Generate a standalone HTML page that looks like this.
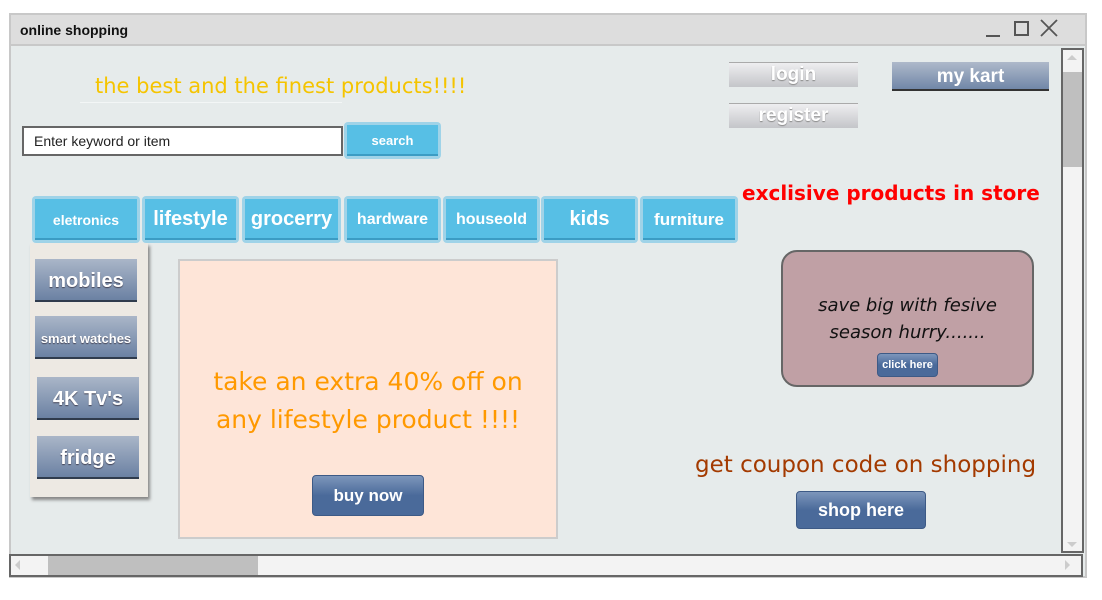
<!DOCTYPE html>
<html><head><meta charset="utf-8"><style>
*{box-sizing:border-box;margin:0;padding:0}
body{width:1102px;height:600px;background:#fff;position:relative;overflow:hidden;font-family:"Liberation Sans",sans-serif}
.a{position:absolute}
.comic{font-family:"Comic Sans MS","DejaVu Sans",sans-serif}
.tab{position:absolute;top:196px;height:47px;background:#9fd3e8;border-radius:4px;padding:3px}
.tab div{width:100%;height:100%;background:#57bfe5;border-bottom:2px solid #3b9cc4;color:#fff;font-weight:bold;display:flex;align-items:center;justify-content:center;padding-top:2px}
.sb{position:absolute;width:102px;height:43px;background:linear-gradient(#aab6c8,#6b81a3);border-bottom:2px solid #2f3b4d;color:#fff;font-weight:bold;display:flex;align-items:center;justify-content:center;text-shadow:0 1px 1px #445;padding-top:3px}
.gb{position:absolute;width:129px;height:25px;background:linear-gradient(#eeeef0,#c4c5c9);border-top:1px solid #aaa;color:#fff;font-weight:bold;font-size:19px;display:flex;align-items:center;justify-content:center;text-shadow:0 1px 1px #888}
.bb{position:absolute;background:linear-gradient(#7d96bb,#4a6a9a 50%);border:1px solid #3d5a86;border-radius:4px;color:#fff;font-weight:bold;display:flex;align-items:center;justify-content:center}
</style></head><body>
<div class="a" style="left:9px;top:13px;width:1078px;height:565px;border:2px solid #c8c8c8;background:#e6ebeb"></div>
<div class="a" style="left:11px;top:15px;width:1074px;height:31px;background:#dddddd;border-bottom:2px solid #c8c8c8"></div>
<div class="a" style="left:20px;top:22px;font-size:14px;font-weight:bold;color:#111">online shopping</div>
<div class="a" style="left:986px;top:35px;width:14px;height:2px;background:#555"></div>
<div class="a" style="left:1014px;top:21px;width:15px;height:15px;border:2px solid #555"></div>
<svg class="a" style="left:1040px;top:19px" width="18" height="18"><path d="M1 1L17 17M17 1L1 17" stroke="#555" stroke-width="1.8"/></svg>
<div class="a" style="left:1061px;top:48px;width:23px;height:505px;background:#f3f3f3;border:2px solid #666"></div>
<div class="a" style="left:1063px;top:72px;width:19px;height:95px;background:#bfbfbf"></div>
<svg class="a" style="left:1066px;top:53px" width="12" height="8"><path d="M1 7L6 2L11 7Z" fill="#ccc"/></svg>
<svg class="a" style="left:1066px;top:541px" width="12" height="8"><path d="M1 1L6 6L11 1Z" fill="#ccc"/></svg>
<div class="a" style="left:9px;top:554px;width:1074px;height:23px;background:#f3f3f3;border:2px solid #666"></div>
<div class="a" style="left:48px;top:556px;width:210px;height:19px;background:#bfbfbf"></div>
<svg class="a" style="left:13px;top:559px" width="8" height="12"><path d="M7 1L2 6L7 11Z" fill="#ccc"/></svg>
<svg class="a" style="left:1064px;top:559px" width="8" height="12"><path d="M1 1L6 6L1 11Z" fill="#ccc"/></svg>

<div class="a comic" style="left:95px;top:74px;font-size:21px;color:#f5c400">the best and the finest products!!!!</div>
<div class="a" style="left:80px;top:102px;width:262px;height:1px;background:#f3f6f6"></div>
<div class="a" style="left:22px;top:126px;width:321px;height:30px;border:2px solid #666;background:#fff;font-size:14px;color:#222;padding:5px 10px">Enter keyword or item</div>
<div class="tab" style="left:344px;top:122px;width:97px;height:37px"><div style="font-size:13px">search</div></div>

<div class="gb" style="left:729px;top:62px">login</div>
<div class="gb" style="left:729px;top:103px">register</div>
<div class="a" style="left:892px;top:62px;width:157px;height:29px;background:linear-gradient(#aeb9ca,#7187a8);border-bottom:2px solid #333;color:#fff;font-weight:bold;font-size:19px;display:flex;align-items:center;justify-content:center;padding-top:2px">my kart</div>

<div class="a comic" style="left:742px;top:181px;font-size:20px;color:#f00;font-weight:bold">exclisive products in store</div>

<div class="tab" style="left:32px;width:108px"><div style="font-size:14px">eletronics</div></div>
<div class="tab" style="left:142px;width:97px"><div style="font-size:20px">lifestyle</div></div>
<div class="tab" style="left:242px;width:99px"><div style="font-size:20px">grocerry</div></div>
<div class="tab" style="left:344px;width:97px"><div style="font-size:16px">hardware</div></div>
<div class="tab" style="left:443px;width:97px"><div style="font-size:16px">houseold</div></div>
<div class="tab" style="left:541px;width:97px"><div style="font-size:20px">kids</div></div>
<div class="tab" style="left:640px;width:98px"><div style="font-size:17px">furniture</div></div>

<div class="a" style="left:30px;top:243px;width:118px;height:254px;background:#ede9e3;box-shadow:2px 3px 3px #888"></div>
<div class="sb" style="left:35px;top:259px;font-size:20px">mobiles</div>
<div class="sb" style="left:35px;top:316px;font-size:13px">smart watches</div>
<div class="sb" style="left:37px;top:377px;font-size:20px">4K Tv's</div>
<div class="sb" style="left:37px;top:436px;font-size:20px">fridge</div>

<div class="a" style="left:178px;top:259px;width:380px;height:280px;background:#fee5d8;border:2px solid #ccc"></div>
<div class="a comic" style="left:180px;top:363px;width:376px;text-align:center;font-size:25px;line-height:38px;color:#ff9900">take an extra 40% off on<br>any lifestyle product !!!!</div>
<div class="bb" style="left:312px;top:475px;width:112px;height:41px;font-size:17px">buy now</div>

<div class="a" style="left:781px;top:250px;width:253px;height:137px;background:#c0a0a5;border:2px solid #666;border-radius:16px"></div>
<div class="a comic" style="left:783px;top:292px;width:249px;text-align:center;font-size:18px;line-height:27px;font-style:italic;color:#111">save big with fesive<br>season hurry.......</div>
<div class="bb" style="left:877px;top:353px;width:61px;height:24px;font-size:11px">click here</div>

<div class="a comic" style="left:695px;top:452px;font-size:23px;color:#a33a00">get coupon code on shopping</div>
<div class="bb" style="left:796px;top:491px;width:130px;height:38px;font-size:18px">shop here</div>
</body></html>
